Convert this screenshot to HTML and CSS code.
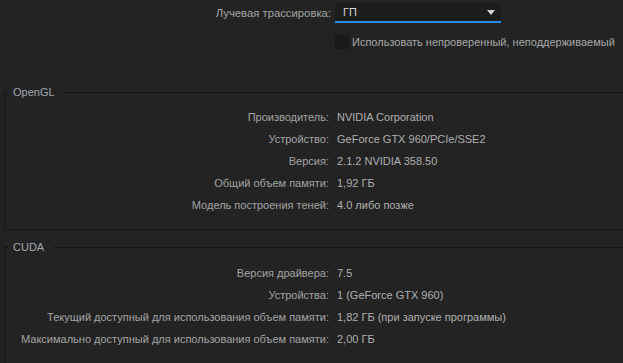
FILE: index.html
```html
<!DOCTYPE html>
<html lang="ru">
<head>
    <meta charset="UTF-8">
    <meta name="viewport" content="width=device-width, initial-scale=1.0">
    <title>Параметры GPU</title>
    <link rel="stylesheet" href="styles.css">
</head>
<body>
    <div class="panel">
        <div class="render-row">
            <span class="label">Лучевая трассировка:</span>
            <div class="select">
                <span class="select-value">ГП</span>
                <svg class="select-arrow" width="8" height="5" viewBox="0 0 8 5"><path d="M0 0H8L4 5Z" fill="#d4d4d4"/></svg>
            </div>
        </div>
        <label class="check-row">
            <span class="checkbox"></span>
            <span class="check-text">Использовать непроверенный, неподдерживаемый</span>
        </label>

        <fieldset class="group">
            <legend>OpenGL</legend>
            <div class="info">
                <span class="label">Производитель:</span><span class="value">NVIDIA Corporation</span>
                <span class="label">Устройство:</span><span class="value">GeForce GTX 960/PCIe/SSE2</span>
                <span class="label">Версия:</span><span class="value">2.1.2 NVIDIA 358.50</span>
                <span class="label">Общий объем памяти:</span><span class="value">1,92 ГБ</span>
                <span class="label">Модель построения теней:</span><span class="value">4.0 либо позже</span>
            </div>
        </fieldset>

        <fieldset class="group">
            <legend>CUDA</legend>
            <div class="info">
                <span class="label">Версия драйвера:</span><span class="value">7.5</span>
                <span class="label">Устройства:</span><span class="value">1 (GeForce GTX 960)</span>
                <span class="label">Текущий доступный для использования объем памяти:</span><span class="value">1,82 ГБ (при запуске программы)</span>
                <span class="label">Максимально доступный для использования объем памяти:</span><span class="value">2,00 ГБ</span>
            </div>
        </fieldset>
    </div>
</body>
</html>
```
FILE: styles.css
```css
body {
    margin: 0;
    background-color: #232323;
    color: #a3a3a3;
    font-family: "Liberation Sans", Arial, sans-serif;
    font-size: 11px;
    overflow: hidden;
}
.panel {
    padding-top: 3px;
}
.render-row {
    display: grid;
    grid-template-columns: 331px 166px;
    column-gap: 4px;
    align-items: center;
}
.render-row .label {
    font-size: 11.3px;
}
.label {
    text-align: right;
    white-space: nowrap;
}
.select {
    height: 18px;
    background-color: #1c1c1c;
    border-bottom: 2px solid #2a8be4;
    display: flex;
    align-items: center;
    justify-content: space-between;
    padding: 0 6px 0 8px;
}
.select-value {
    color: #d6d6d6;
}
.check-row {
    display: flex;
    align-items: center;
    gap: 3px;
    margin: 12px 0 0 335px;
    white-space: nowrap;
}
.checkbox {
    width: 14px;
    height: 14px;
    background-color: #1a1a1a;
    flex: none;
}
.check-text {
    color: #a8a8a8;
    font-size: 11px;
}
.group {
    margin: 0 -20px 10px 4px;
    padding: 7px 0 13px 0;
    border: 1px solid #161616;
}
.panel > .group:first-of-type {
    margin-top: 36px;
}
.group + .group {
    padding-top: 8px;
}
.group legend {
    margin-left: 3px;
    padding: 0 9px 0 5px;
    line-height: 14px;
    color: #a1a7b0;
}
.info {
    display: grid;
    grid-template-columns: 324px 1fr;
    grid-auto-rows: 22px;
    column-gap: 8px;
    align-items: center;
}
.value {
    color: #b0b0b0;
    white-space: nowrap;
}
```
